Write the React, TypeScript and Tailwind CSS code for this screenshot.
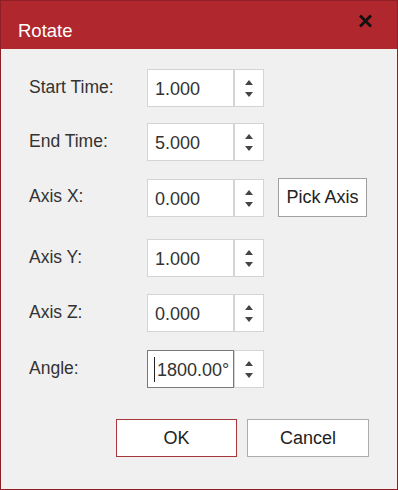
// Rotate dialog — numeric spin fields for a timed rotation about an axis.
const font = { fontFamily: '"Liberation Sans", Arial, sans-serif' }

type Field = { label: string; value: string; focused?: boolean; pick?: boolean; mt: string }

const fields: Field[] = [
  { label: 'Start Time:', value: '1.000', mt: 'mt-[20px]' },
  { label: 'End Time:', value: '5.000', mt: 'mt-[16px]' },
  { label: 'Axis X:', value: '0.000', pick: true, mt: 'mt-[17px]' },
  { label: 'Axis Y:', value: '1.000', mt: 'mt-[22px]' },
  { label: 'Axis Z:', value: '0.000', mt: 'mt-[17px]' },
  { label: 'Angle:', value: '1800.00°', focused: true, mt: 'mt-[18px]' },
]

function Spinner() {
  return (
    <div className="flex h-[38px] w-[30px] flex-col items-center justify-between border border-[#d4d4d4] bg-white pb-[9px] pt-[10px]">
      <div className="h-0 w-0 border-x-[4px] border-b-[5px] border-x-transparent border-b-[#444]" />
      <div className="h-0 w-0 border-x-[4px] border-t-[5px] border-x-transparent border-t-[#444]" />
    </div>
  )
}

function Row({ f }: { f: Field }) {
  return (
    <div className={`flex items-center ${f.mt}`}>
      <div className="w-[118px] pb-[2px] text-[17.5px] text-[#333]">{f.label}</div>
      <div
        className={`flex h-[38px] w-[87px] items-center overflow-hidden bg-white ${
          f.focused ? 'border border-[#7a7a7a] pl-[6px]' : 'border border-[#d4d4d4] pl-[7px]'
        }`}
      >
        {f.focused && <span className="mr-[2px] h-[25px] w-px shrink-0 bg-[#222]" />}
        <span className="whitespace-nowrap pt-[3px] text-[18px] text-[#333]">{f.value}</span>
      </div>
      <Spinner />
      {f.pick && (
        <button className="ml-[14px] h-[39px] w-[89px] border border-[#a0a0a0] bg-white text-[18px] text-[#222]">
          Pick Axis
        </button>
      )}
    </div>
  )
}

export default function App() {
  return (
    <div style={font} className="h-[490px] w-[398px] border border-[#8e1f25] bg-[#f0f0f0]">
      <div className="flex h-[48px] items-center justify-between bg-[#b0272d] pl-[17px] pr-[24px]">
        <span className="pt-[12px] text-[18.5px] text-white">Rotate</span>
        <svg width="15" height="14" viewBox="0 0 15 14" className="mb-[8px]">
          <path d="M2 1.5 L13 12.5 M13 1.5 L2 12.5" stroke="#111" strokeWidth="2.8" />
        </svg>
      </div>
      <div className="pl-[28px]">
        {fields.map((f) => (
          <Row key={f.label} f={f} />
        ))}
        <div className="ml-[87px] mt-[31px] flex gap-[10px]">
          <button className="h-[38px] w-[121px] border border-[#a8373c] bg-white text-[18px] text-[#222]">OK</button>
          <button className="h-[38px] w-[122px] border border-[#adadad] bg-white text-[18px] text-[#222]">Cancel</button>
        </div>
      </div>
    </div>
  )
}
